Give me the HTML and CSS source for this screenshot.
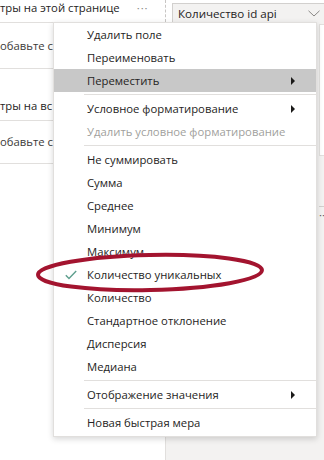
FILE: index.html
```html
<!DOCTYPE html>
<html lang="ru">
<head>
<meta charset="utf-8">
<title>Меню поля</title>
<link rel="stylesheet" href="styles.css">
</head>
<body>
<div class="screen">
  <div class="left">
    <div class="row row-head"><span>тры на этой странице</span><span class="more">···</span></div>
    <div class="row row-well">обавьте сн</div>
    <div class="row row-head2">тры на вс</div>
    <div class="row row-well2">обавьте сн</div>
  </div>
  <div class="right">
    <div class="topbar">
      <div class="dd">
        <span class="dd-text">Количество id api</span>
        <svg class="chev" width="12" height="7" viewBox="0 0 12 7"><polyline points="0.5,0.8 6,6 11.5,0.8" fill="none" stroke="#8a8886" stroke-width="1"/></svg>
        <svg class="dd-x" width="8" height="8" viewBox="0 0 8 8"><path d="M0.5 0.5 L7.5 7.5 M7.5 0.5 L0.5 7.5" stroke="#8a8886" stroke-width="1"/></svg>
      </div>
    </div>
    <div class="pane">
      <div class="card"></div>
      <div class="pane-rest">
        <div class="pane-line"></div>
        <div class="pane-dots">··</div>
      </div>
    </div>
  </div>

  <div class="menu">
    <div class="item"><span class="ic"></span><span>Удалить поле</span></div>
    <div class="item"><span class="ic"></span><span>Переименовать</span></div>
    <div class="item active"><span class="ic"></span><span>Переместить</span><span class="arr"></span></div>
    <div class="sep"></div>
    <div class="item"><span class="ic"></span><span>Условное форматирование</span><span class="arr"></span></div>
    <div class="item disabled"><span class="ic"></span><span>Удалить условное форматирование</span></div>
    <div class="sep"></div>
    <div class="item"><span class="ic"></span><span>Не суммировать</span></div>
    <div class="item"><span class="ic"></span><span>Сумма</span></div>
    <div class="item"><span class="ic"></span><span>Среднее</span></div>
    <div class="item"><span class="ic"></span><span>Минимум</span></div>
    <div class="item"><span class="ic"></span><span>Максимум</span></div>
    <div class="item"><span class="ic"><svg width="12" height="10" viewBox="0 0 12 10"><polyline points="0.8,5.2 4,8.6 11.2,0.9" fill="none" stroke="#5e9f8e" stroke-width="1.4"/></svg></span><span>Количество уникальных</span></div>
    <div class="item"><span class="ic"></span><span>Количество</span></div>
    <div class="item"><span class="ic"></span><span>Стандартное отклонение</span></div>
    <div class="item"><span class="ic"></span><span>Дисперсия</span></div>
    <div class="item"><span class="ic"></span><span>Медиана</span></div>
    <div class="sep"></div>
    <div class="item"><span class="ic"></span><span>Отображение значения</span><span class="arr"></span></div>
    <div class="sep"></div>
    <div class="item"><span class="ic"></span><span>Новая быстрая мера</span></div>
  </div>

  <svg class="ring" width="324" height="460" viewBox="0 0 324 460">
    <ellipse cx="150" cy="272.5" rx="112" ry="17.5" transform="rotate(-1.2 150 272.5)" fill="none" stroke="#a3142f" stroke-width="4"/>
  </svg>
</div>
</body>
</html>
```
FILE: styles.css
```css
html, body {
  margin: 0;
  padding: 0;
  background: #ffffff;
}
.screen {
  position: relative;
  width: 324px;
  height: 460px;
  overflow: hidden;
  display: flex;
  font-family: "Open Sans", "Noto Sans", sans-serif;
  font-size: 11.3px;
  color: #252423;
}
.left {
  width: 165px;
  flex: none;
  display: flex;
  flex-direction: column;
  background: #ffffff;
}
.row {
  border-bottom: 1px solid #e1dfdd;
  white-space: nowrap;
  overflow: hidden;
  box-sizing: border-box;
}
.row-head {
  height: 23px;
  line-height: 16px;
  display: flex;
}
.more {
  margin-left: 17px;
  color: #8a8886;
  letter-spacing: 1px;
}
.row-well {
  height: 46px;
  line-height: 46px;
  color: #3b3a39;
}
.row-head2 {
  height: 52px;
  padding-top: 29px;
  line-height: 16px;
}
.row-well2 {
  height: 43px;
  line-height: 42px;
  color: #3b3a39;
}
.right {
  flex: 1;
  display: flex;
  flex-direction: column;
  min-width: 0;
}
.topbar {
  height: 22px;
  flex: none;
  border-left: 1px dashed #c8c6c4;
  padding: 3px 0 0 6px;
  box-sizing: border-box;
  background: #ffffff;
}
.dd {
  height: 19px;
  width: 170px;
  background: #f3f2f1;
  border: 1px solid #d2d0ce;
  border-bottom: none;
  box-sizing: border-box;
  display: flex;
  align-items: center;
  padding-left: 5px;
  white-space: nowrap;
}
.dd-text {
  font-size: 11.6px;
  color: #252423;
}
.chev {
  margin-left: 31px;
  flex: none;
}
.dd-x {
  margin-left: 5px;
  flex: none;
}
.pane {
  flex: 1;
  display: flex;
  flex-direction: column;
  background: #f3f2f1;
  border-left: 1px solid #e1dfdd;
}
.card {
  height: 130px;
  margin: 2px 0 0 153px;
  background: #ffffff;
  border-left: 1px solid #e1dfdd;
  border-top: 1px solid #e1dfdd;
  border-bottom: 1px solid #e1dfdd;
}
.pane-rest {
  flex: 1;
  padding-left: 153px;
}
.pane-line {
  height: 1px;
  margin-top: 50px;
  background: #d2d0ce;
}
.pane-dots {
  color: #605e5c;
  line-height: 12px;
  margin-top: 2px;
}
.menu {
  position: absolute;
  left: 53px;
  top: 22px;
  width: 264px;
  box-sizing: border-box;
  background: #ffffff;
  border: 1px solid #e1dfdd;
  box-shadow: 0 2px 6px rgba(0, 0, 0, 0.16);
  padding: 0 0 2px 0;
}
.item {
  height: 23px;
  display: flex;
  align-items: center;
  padding-right: 21px;
  white-space: nowrap;
}
.item .ic {
  width: 33px;
  flex: none;
  display: flex;
  align-items: center;
  padding-left: 11px;
  box-sizing: border-box;
}
.item .arr {
  margin-left: auto;
  width: 0;
  height: 0;
  border-top: 4px solid transparent;
  border-bottom: 4px solid transparent;
  border-left: 4px solid #1b1a19;
}
.item.active {
  background: #c8c8c8;
}
.item.disabled {
  color: #a19f9d;
}
.sep {
  height: 1px;
  margin: 2px 0 2px 30px;
  background: #e1dfdd;
}
.ring {
  position: absolute;
  left: 0;
  top: 0;
  pointer-events: none;
}
```
